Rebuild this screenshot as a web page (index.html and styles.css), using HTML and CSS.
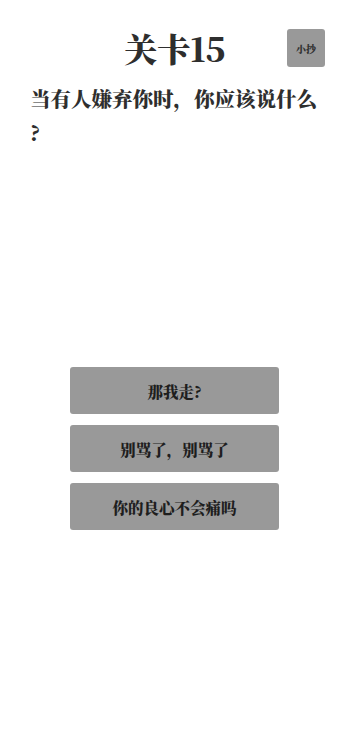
FILE: index.html
```html
<!DOCTYPE html>
<html lang="zh-CN">
<head>
  <meta charset="UTF-8">
  <meta name="viewport" content="width=device-width, initial-scale=1.0">
  <title>关卡15</title>
  <link rel="stylesheet" href="styles.css">
</head>
<body>
  <div class="level-page">
    <div class="level-header">
      <h1 class="level-title">关卡15</h1>
      <button class="hint-btn">小抄</button>
    </div>
    <p class="question">当有人嫌弃你时，你应该说什么?</p>

    <div class="answers">
      <button class="answer-btn">那我走?</button>
      <button class="answer-btn">别骂了，别骂了</button>
      <button class="answer-btn">你的良心不会痛吗</button>
    </div>
  </div>
</body>
</html>
```

FILE: styles.css
```css
/* General Styles */
body {
  font-family: "Noto Serif CJK SC", "Noto Sans CJK SC", serif;
  margin: 0;
  padding: 0;
  background: #fff;
  color: #333;
}

.level-page {
  width: 350px;
  height: 738px;
}

.level-header {
  position: relative;
  display: flex;
  justify-content: center;
  align-items: center;
  height: 38px;
  padding-top: 29px;
}
.level-title {
  margin: 0;
  font-size: 33px;
  font-weight: 900;
  line-height: 38px;
  color: #2e2e2e;
}
.hint-btn {
  position: absolute;
  right: 25px;
  top: 29px;
  width: 38px;
  height: 38px;
  padding: 0;
  border: none;
  border-radius: 3px;
  background: #999;
  color: #333;
  font-family: inherit;
  font-size: 10px;
  font-weight: 900;
}

.question {
  margin: 14px 30px 0 30px;
  font-size: 20.5px;
  font-weight: 900;
  line-height: 34px;
  line-break: anywhere;
  color: #2e2e2e;
}

.answers {
  display: flex;
  flex-direction: column;
  align-items: center;
  gap: 11px;
  margin-top: 218px;
}
.answer-btn {
  width: 209px;
  height: 47px;
  margin-left: -1px;
  border: none;
  border-radius: 3px;
  background: #999;
  color: #1e1e1e;
  font-family: inherit;
  font-size: 15.5px;
  font-weight: 900;
}
```
